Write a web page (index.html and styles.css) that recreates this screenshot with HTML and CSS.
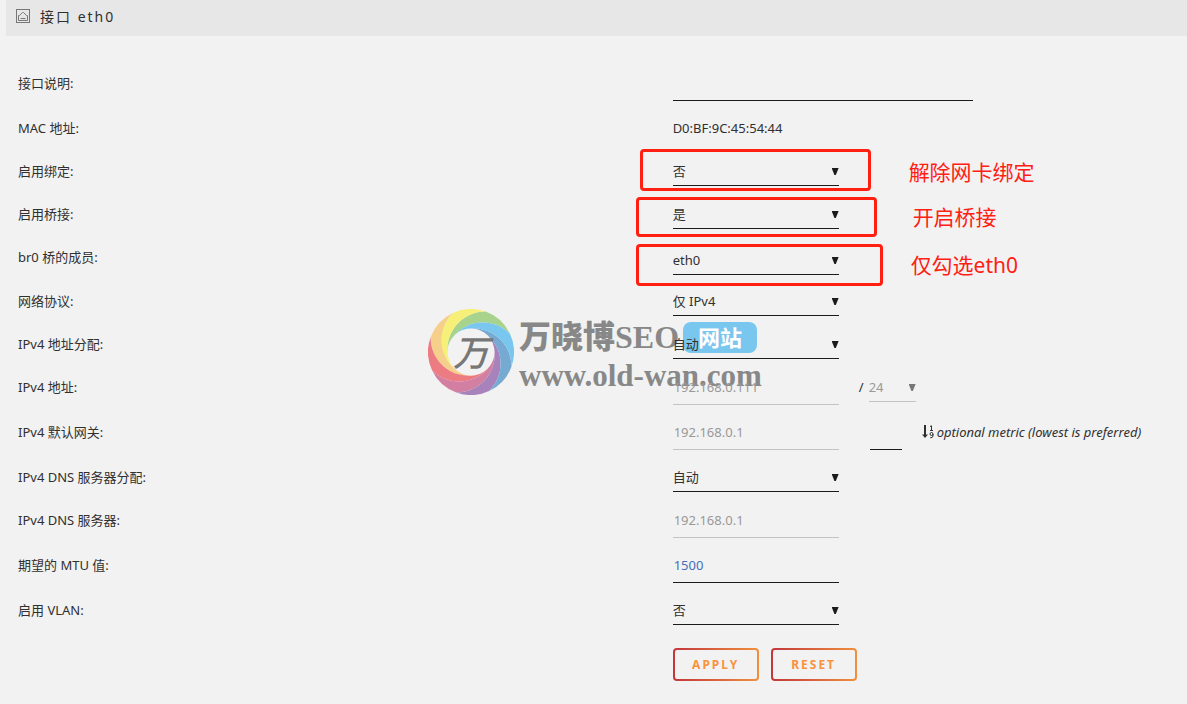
FILE: index.html
```html
<!DOCTYPE html>
<html lang="zh-CN">
<head>
<meta charset="utf-8">
<title>接口 eth0</title>
<link rel="stylesheet" href="styles.css">
</head>
<body>
<header class="title">
  <svg class="title-icon" viewBox="0 0 14 14" aria-hidden="true">
    <rect x=".5" y=".5" width="13" height="13"/>
    <path d="M2.500 11.500V6.500H3.500L6.500 3.500H7.500L10.500 6.500H11.500V11.500ZM4.500 9.500H9.500"/>
  </svg>
  <h1>接口 eth0</h1>
</header>
<main>
<form class="settings">
  <div class="row row-input">
    <label for="desc">接口说明:</label>
    <div class="control"><input class="field wide" id="desc" type="text"></div>
  </div>
  <div class="row">
    <span>MAC 地址:</span>
    <div class="control">D0:BF:9C:45:54:44</div>
  </div>
  <div class="row">
    <label for="bonding">启用绑定:</label>
    <div class="control">
      <div class="select"><select id="bonding"><option>否</option></select></div>
      <div class="mark mark-bonding"></div><p class="note note-bonding">解除网卡绑定</p>
    </div>
  </div>
  <div class="row">
    <label for="bridging">启用桥接:</label>
    <div class="control">
      <div class="select"><select id="bridging"><option>是</option></select></div>
      <div class="mark mark-bridging"></div><p class="note note-bridging">开启桥接</p>
    </div>
  </div>
  <div class="row row-members">
    <label for="members">br0 桥的成员:</label>
    <div class="control">
      <div class="select members"><select id="members"><option>eth0</option></select></div>
      <div class="mark mark-members"></div><p class="note note-members">仅勾选eth0</p>
    </div>
  </div>
  <div class="row">
    <label for="protocol">网络协议:</label>
    <div class="control"><div class="select"><select id="protocol"><option>仅 IPv4</option></select></div></div>
  </div>
  <div class="row">
    <label for="assign">IPv4 地址分配:</label>
    <div class="control"><div class="select"><select id="assign"><option>自动</option></select></div></div>
  </div>
  <div class="row row-input">
    <label for="address">IPv4 地址:</label>
    <div class="control">
      <input class="field" id="address" type="text" value="192.168.0.111" disabled>
      <span class="slash">/</span>
      <div class="select mask off"><select aria-label="掩码" disabled><option>24</option></select></div>
    </div>
  </div>
  <div class="row row-input">
    <label for="gateway">IPv4 默认网关:</label>
    <div class="control">
      <input class="field" id="gateway" type="text" value="192.168.0.1" disabled>
      <input class="field metric" id="metric" type="text">
      <label class="hint" for="metric">
        <svg class="sort-icon" viewBox="0 0 13 14" aria-hidden="true">
          <path d="M3 0V11" stroke-width="2"/><path class="solid" d="M0 9.500H6L3 13Z"/>
          <path d="M8 1.500L9.500 .8V5.500M8 5.500H11"/>
          <circle cx="9.500" cy="9" r="1.500"/><path d="M11 9V11Q11 12.800 8.200 12.800"/>
        </svg>
        <em>optional metric (lowest is preferred)</em>
      </label>
    </div>
  </div>
  <div class="row">
    <label for="dns-assign">IPv4 DNS 服务器分配:</label>
    <div class="control"><div class="select"><select id="dns-assign"><option>自动</option></select></div></div>
  </div>
  <div class="row row-input">
    <label for="dns">IPv4 DNS 服务器:</label>
    <div class="control"><input class="field" id="dns" type="text" value="192.168.0.1" disabled></div>
  </div>
  <div class="row row-input">
    <label for="mtu">期望的 MTU 值:</label>
    <div class="control"><input class="field" id="mtu" type="text" value="1500"></div>
  </div>
  <div class="row">
    <label for="vlan">启用 VLAN:</label>
    <div class="control"><div class="select"><select id="vlan"><option>否</option></select></div></div>
  </div>
  <div class="row">
    <span></span>
    <div class="button-group"><button type="button">APPLY</button><button type="reset">RESET</button></div>
  </div>
</form>
<aside class="watermark">
  <svg class="swirl" viewBox="-43 -43 86 86" aria-hidden="true">
    <defs><path id="blade" d="M23.500 0A38 38 0 0 1 -21.500 37.240A43 43 0 0 0 -41.530 11.130" /></defs>
    <defs><path id="petal" d="M23.500 0A38 38 0 0 1 -21.500 37.240A43 43 0 0 1 -41.530 11.130A38 38 0 0 0 16.620 16.620A23.500 23.500 0 0 0 23.500 0Z"/></defs>
    <use href="#petal" fill="#a8d38d" transform="rotate(170)"/>
    <use href="#petal" fill="#f7f078" transform="rotate(125)"/>
    <use href="#petal" fill="#f6cf8b" transform="rotate(80)"/>
    <use href="#petal" fill="#ed7b82" transform="rotate(35)"/>
    <use href="#petal" fill="#d37fa1" transform="rotate(-10)"/>
    <use href="#petal" fill="#a883bb" transform="rotate(-55)"/>
    <use href="#petal" fill="#77aad3" transform="rotate(-100)"/>
    <use href="#petal" fill="#79c7ee" transform="rotate(-145)"/>
  </svg>
  <span class="seal">万</span>
  <div class="brand">
    <div class="brand-name"><strong>万晓博SEO</strong><span class="badge">网站</span></div>
    <div class="brand-url">www.old-wan.com</div>
  </div>
</aside>
</main>
</body>
</html>
```
FILE: styles.css
```css
*{box-sizing:border-box}
body{margin:0;background:#f2f2f2;color:#303030;font:13px/24px "Noto Sans","Noto Sans CJK SC",sans-serif}
.title{display:flex;align-items:center;gap:10px;height:36px;margin-left:6px;padding:0 10px 4px;background:#e7e7e7}
.title-icon{width:14px;height:14px;fill:none;stroke:#777}
h1{margin:0;padding-top:2px;font-size:14px;font-weight:400;letter-spacing:2px}
main{position:relative}
.settings{padding:35px 0 20px 18px}
.row{display:grid;grid-template-columns:56% 1fr;align-items:start;min-height:43px}
.row-input{min-height:45px}
.row-members{min-height:44px}
.control{position:relative;z-index:1;display:flex;align-items:flex-start;white-space:nowrap}
.field,select{font:inherit;color:inherit;background:transparent;border:0;border-bottom:1px solid #1c1b1b;border-radius:0;outline:0;margin:0;appearance:none}
.field{width:166px;height:30px;padding:0 0 5px 1px}
.wide{width:300px}
#mtu{color:#486dba}
.field:disabled,select:disabled{color:#999;border-color:#c4c4c4;opacity:1}
.select{position:relative;width:166px}
.select select{display:block;width:100%;height:27px;padding:0 0 2px}
.select::after{content:"";position:absolute;right:0;bottom:11px;width:7px;height:7px;background:#1c1b1b;clip-path:polygon(0 0,100% 0,60% 100%,40% 100%);pointer-events:none}
.members{padding-top:3px}
.off::after{background:#777}
.slash{margin-left:20px;width:10px}
.mask{width:47px}
.metric{width:32px;margin-left:31px}
.hint{display:flex;align-items:center;gap:2px;margin-left:20px}
.sort-icon{width:13px;height:14px;fill:none;stroke:#303030}
.sort-icon .solid{fill:#303030;stroke:none}
.mark{position:absolute;border:3px solid #ff2012;border-radius:4px;pointer-events:none}
.mark-bonding{left:-33px;top:-10px;width:231px;height:42px}
.mark-bridging{left:-37px;top:-5px;width:241px;height:40px}
.mark-members{left:-37px;top:-1px;width:247px;height:42px}
.note{position:absolute;margin:0;color:#ff2012;font-size:21px}
.note-bonding{left:236px;top:1px}
.note-bridging{left:240px;top:3px}
.note-members{left:238px;top:8px}
.button-group{display:flex;gap:12px;padding-top:7px}
button{width:86px;height:33px;padding:0;border:2px solid transparent;border-radius:4px;background:linear-gradient(#f2f2f2,#f2f2f2) padding-box,linear-gradient(90deg,#c3363c,#f0903d) border-box;color:#f8923f;font:bold 12px "Noto Sans",sans-serif;letter-spacing:2px}
.watermark{position:absolute;left:428px;top:273px;display:flex;gap:5px;pointer-events:none}
.swirl{width:86px;height:86px}
.seal{position:absolute;left:0;top:0;width:86px;text-align:center;font:italic 500 36px/82px "Noto Sans CJK SC",sans-serif;color:#777}
.brand{color:#888;font-family:"Liberation Serif","Noto Sans CJK SC",serif;font-weight:bold;padding-top:10px}
.brand-name{display:flex;align-items:center;gap:4px;font-size:32px;line-height:36px}
.badge{width:74px;height:31px;border-radius:8px;background:#79c7ee;color:#fff;font:bold 22px/28px "Noto Sans CJK SC",sans-serif;text-align:center}
.brand-url{font-size:31px;line-height:42px}
```
